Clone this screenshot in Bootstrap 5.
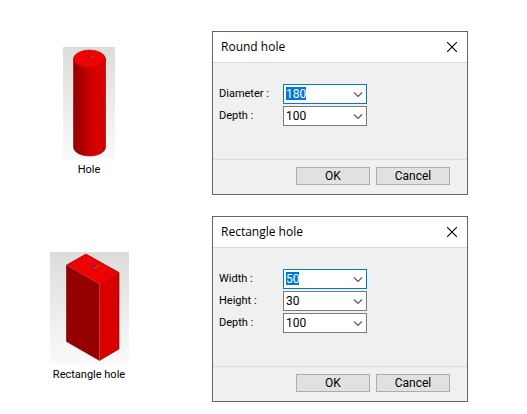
<!DOCTYPE html>
<html lang="en">
<head>
<meta charset="utf-8">
<meta name="viewport" content="width=device-width, initial-scale=1">
<title>Hole tools</title>
<link href="https://cdn.jsdelivr.net/npm/bootstrap@5.3.0/dist/css/bootstrap.min.css" rel="stylesheet">
<style>
body { background: #fff; color: #000; font: 12px/20px Roboto, "Liberation Sans", sans-serif; }
main { gap: 21px; padding: 31px 59px 12px 28px; }
.tool-row { gap: 62px; }
.tool-shape { flex: 0 0 122px; gap: 1px; padding-top: 16px; font-size: 11px; }
.tool-row + .tool-row .tool-shape { padding-top: 36px; }
.tool-shape svg { display: block; }
.dialog-box { background: #f0f0f0; border: 1px solid #646464; }
.dialog-title { height: 31px; padding: 0 8px; background: #fff; border-bottom: 1px solid #dcdcdc; font: 12px/30px "Open Sans", "Noto Sans", sans-serif; }
.close-btn { width: 14px; height: 14px; }
.dialog-fields { gap: 2px; padding: 21px 6px 33px; font-size: 11px; }
.field-label { width: 64px; line-height: 20px; }
.combo { width: 84px; height: 20px; background: #fff; border: 1px solid #7a7a7a; padding: 0 3px 0 2px; }
.combo input { min-width: 0; height: 18px; padding: 0; border: 0; outline: 0; background: #fff; color: #000; font-size: 12px; }
.combo-active { border-color: #0078d7; }
.combo-active input { color: #fff; background: linear-gradient(#0078d7, #0078d7) 0 2px / var(--marked) 13px no-repeat #fff; }
.marked-3 { --marked: 3ch; }
.marked-2 { --marked: 2ch; }
.combo svg { display: block; }
.dialog-actions { gap: 6px; padding: 7px 17px 9px; border-top: 1px solid #dcdcdc; }
.push-btn { width: 74px; height: 18px; padding: 0; background: #e1e1e1; border: 1px solid #adadad; border-radius: 0; color: #000; font-size: 12px; line-height: 16px; }
</style>
<script src="https://cdn.jsdelivr.net/npm/bootstrap@5.3.0/dist/js/bootstrap.bundle.min.js"></script>
</head>
<body>
<svg width="0" height="0" class="position-absolute" aria-hidden="true">
  <defs>
    <linearGradient id="backdrop" x2="0" y2="1"><stop stop-color="#dcdddb"/><stop offset="1" stop-color="#fafafa"/></linearGradient>
    <linearGradient id="tube"><stop stop-color="#960000"/><stop offset=".2" stop-color="#a40000"/><stop offset=".55" stop-color="#d00000"/><stop offset=".8" stop-color="#dc0000"/><stop offset="1" stop-color="#d00000"/></linearGradient>
    <symbol id="chevron" viewBox="0 0 10 8"><path d="M1 2.500l4 4 4-4" fill="none" stroke="#555" stroke-width="1.1"/></symbol>
    <symbol id="cross" viewBox="0 0 10 10"><path d="M0 0l10 10M10 0L0 10" fill="none" stroke="#000" stroke-width="1.1"/></symbol>
  </defs>
</svg>
<main class="d-flex flex-column">
  <section class="tool-row d-flex align-items-start">
    <figure class="tool-shape d-flex flex-column align-items-center m-0">
      <svg width="52" height="112" viewBox="0 0 52 112" role="img" aria-label="Red cylinder">
        <path fill="url(#backdrop)" d="M0 0h52v112H0z"/>
        <path d="M10.500 12v88c0 5 7 9 16 9s16-4 16-9V12z" fill="url(#tube)" stroke="#8c0000" stroke-width=".6"/>
        <ellipse cx="26.500" cy="12" rx="16" ry="9" fill="#f00000" stroke="#a00000" stroke-width=".6"/>
        <path d="M26.500 12V6" stroke="#7018a0"/><path d="M26.500 12l5-3" stroke="#a06000"/><path d="M26.500 12l6 3" stroke="#c00000" stroke-width=".8"/>
      </svg>
      <figcaption>Hole</figcaption>
    </figure>
    <form class="dialog-box flex-fill" aria-label="Round hole">
      <div class="dialog-title d-flex justify-content-between align-items-center">
        <span>Round hole</span>
        <button type="button" class="close-btn btn p-0 border-0 rounded-0 d-flex align-items-center justify-content-center" aria-label="Close"><svg width="10" height="10"><use href="#cross"/></svg></button>
      </div>
      <div class="dialog-fields d-flex flex-column">
        <div class="d-flex"><label class="field-label" for="r-diameter">Diameter :</label>
          <div class="combo combo-active marked-3 d-flex align-items-center"><input id="r-diameter" class="flex-fill" type="text" value="180"><button type="button" class="btn p-0 border-0" aria-label="Diameter values"><svg width="10" height="8"><use href="#chevron"/></svg></button></div></div>
        <div class="d-flex"><label class="field-label" for="r-depth">Depth :</label>
          <div class="combo d-flex align-items-center"><input id="r-depth" class="flex-fill" type="text" value="100"><button type="button" class="btn p-0 border-0" aria-label="Depth values"><svg width="10" height="8"><use href="#chevron"/></svg></button></div></div>
      </div>
      <div class="dialog-actions d-flex justify-content-end">
        <button type="button" class="btn push-btn">OK</button>
        <button type="button" class="btn push-btn">Cancel</button>
      </div>
    </form>
  </section>
  <section class="tool-row d-flex align-items-start">
    <figure class="tool-shape d-flex flex-column align-items-center m-0">
      <svg width="79" height="112" viewBox="0 0 79 112" role="img" aria-label="Red block">
        <path fill="url(#backdrop)" d="M0 0h79v112H0z"/>
        <path d="M16.500 13L36 2l33 18.500-19.500 11.500z" fill="#f00000"/>
        <path d="M16.500 13l33 19v76.500l-33-19z" fill="#960000"/>
        <path d="M49.500 32L69 20.500V97l-19.500 11.500z" fill="#d80000"/>
        <path d="M16.500 13L36 2l33 18.500V97l-19.500 11.500-33-19z" fill="none" stroke="#700000" stroke-width=".6"/>
        <path d="M49.500 32L69 20.500" stroke="#b00000" stroke-width=".6"/>
        <path d="M43 17v-7" stroke="#7018a0"/><path d="M43 17l7-4" stroke="#a06000"/><path d="M43 17l7 4" stroke="#c00000" stroke-width=".8"/>
      </svg>
      <figcaption>Rectangle hole</figcaption>
    </figure>
    <form class="dialog-box flex-fill" aria-label="Rectangle hole">
      <div class="dialog-title d-flex justify-content-between align-items-center">
        <span>Rectangle hole</span>
        <button type="button" class="close-btn btn p-0 border-0 rounded-0 d-flex align-items-center justify-content-center" aria-label="Close"><svg width="10" height="10"><use href="#cross"/></svg></button>
      </div>
      <div class="dialog-fields d-flex flex-column">
        <div class="d-flex"><label class="field-label" for="q-width">Width :</label>
          <div class="combo combo-active marked-2 d-flex align-items-center"><input id="q-width" class="flex-fill" type="text" value="50"><button type="button" class="btn p-0 border-0" aria-label="Width values"><svg width="10" height="8"><use href="#chevron"/></svg></button></div></div>
        <div class="d-flex"><label class="field-label" for="q-height">Height :</label>
          <div class="combo d-flex align-items-center"><input id="q-height" class="flex-fill" type="text" value="30"><button type="button" class="btn p-0 border-0" aria-label="Height values"><svg width="10" height="8"><use href="#chevron"/></svg></button></div></div>
        <div class="d-flex"><label class="field-label" for="q-depth">Depth :</label>
          <div class="combo d-flex align-items-center"><input id="q-depth" class="flex-fill" type="text" value="100"><button type="button" class="btn p-0 border-0" aria-label="Depth values"><svg width="10" height="8"><use href="#chevron"/></svg></button></div></div>
      </div>
      <div class="dialog-actions d-flex justify-content-end">
        <button type="button" class="btn push-btn">OK</button>
        <button type="button" class="btn push-btn">Cancel</button>
      </div>
    </form>
  </section>
</main>
</body>
</html>
